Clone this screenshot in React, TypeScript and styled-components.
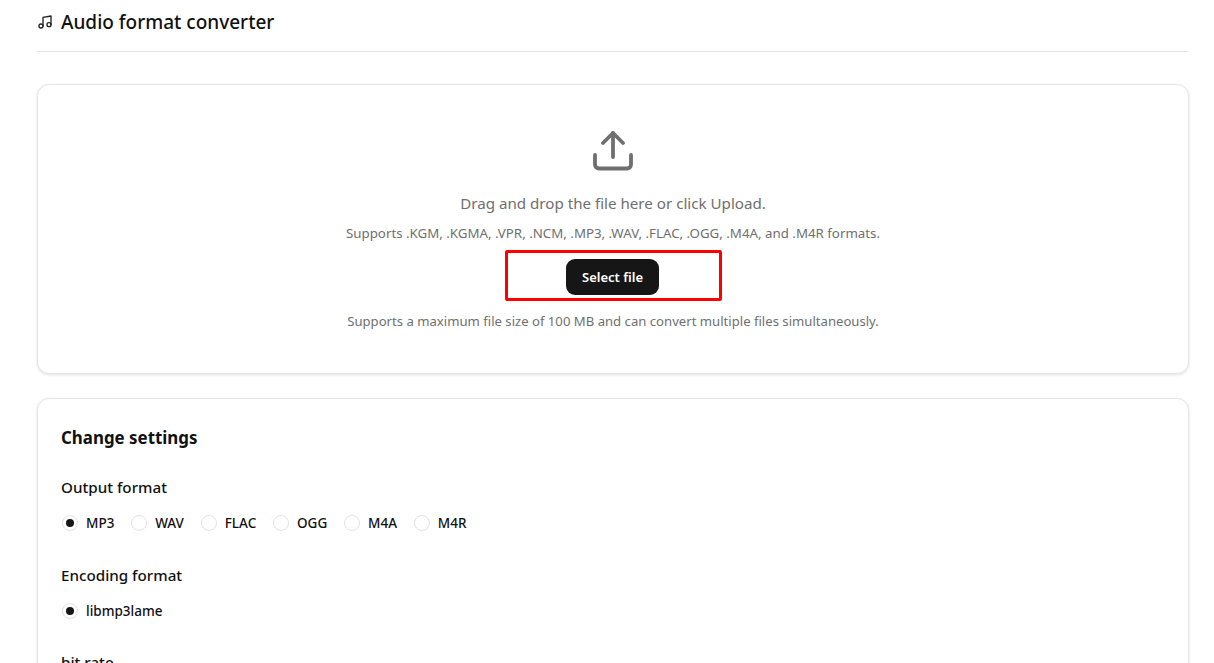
import React from 'react';
import styled, { createGlobalStyle } from 'styled-components';

const GlobalStyle = createGlobalStyle`
  html, body {
    margin: 0;
    padding: 0;
    height: 100%;
    overflow: hidden;
    background: #fff;
    font-family: "Noto Sans", "Open Sans", sans-serif;
    color: #111;
  }
`;

const Page = styled.div`
  height: 663px;
  overflow: hidden;
  padding: 0 25px 0 37px;
`;

const Header = styled.header`
  display: flex;
  align-items: center;
  gap: 8px;
  box-sizing: border-box;
  height: 52px;
  padding-bottom: 7px;
  border-bottom: 1px solid #e5e5e5;
`;

const Title = styled.h1`
  margin: 0;
  font-size: 19px;
  font-weight: 500;
  line-height: 26px;
`;

const Card = styled.section`
  box-sizing: border-box;
  border: 1px solid #e6e6e6;
  border-radius: 12px;
  background: #fff;
  box-shadow: 0 1px 3px rgba(0, 0, 0, 0.12);
`;

const UploadCard = styled(Card)`
  height: 290px;
  margin-top: 32px;
  padding-top: 46px;
  display: flex;
  flex-direction: column;
  align-items: center;
`;

const UploadHint = styled.p`
  margin: 20px 0 0;
  font-size: 15.15px;
  line-height: 24px;
  color: #6f6f6f;
`;

const SmallHint = styled.p<{ $top: number; $size: number }>`
  margin: ${(p) => p.$top}px 0 0;
  font-size: ${(p) => p.$size}px;
  line-height: 18px;
  color: #6f6f6f;
`;

const Highlight = styled.div`
  box-sizing: border-box;
  width: 217px;
  height: 51px;
  margin-top: 8px;
  padding: 2px 2px 0 0;
  border: 3px solid #f00;
  border-radius: 2px;
  display: flex;
  align-items: center;
  justify-content: center;
`;

const SelectButton = styled.button`
  width: 93px;
  height: 36px;
  padding: 0 0 0 1px;
  border: none;
  border-radius: 9px;
  background: #161616;
  color: #fff;
  font-family: inherit;
  font-size: 13px;
  font-weight: 600;
  cursor: pointer;
`;

const SettingsCard = styled(Card)`
  height: 400px;
  margin-top: 24px;
  padding: 25px 23px;
`;

const SettingsTitle = styled.h2`
  margin: 0;
  font-size: 16.9px;
  font-weight: 700;
  line-height: 28px;
`;

const Group = styled.div<{ $top: number }>`
  margin-top: ${(p) => p.$top}px;
`;

const GroupLabel = styled.div`
  font-size: 15.2px;
  font-weight: 500;
  line-height: 22px;
`;

const RadioRow = styled.div`
  display: flex;
  gap: 16.8px;
  margin-top: 15px;
  padding-left: 1px;
`;

const RadioItem = styled.label`
  display: flex;
  align-items: center;
  gap: 8px;
  height: 20px;
  font-size: 13.5px;
  font-weight: 500;
`;

const RadioDot = styled.span<{ $checked?: boolean }>`
  box-sizing: border-box;
  width: 16px;
  height: 16px;
  border-radius: 50%;
  border: 1px solid #e3e3e3;
  background: #fff;
  display: flex;
  align-items: center;
  justify-content: center;

  &::after {
    content: '';
    width: 8px;
    height: 8px;
    border-radius: 50%;
    background: ${(p) => (p.$checked ? '#161616' : 'transparent')};
  }
`;

const outputFormats = ['MP3', 'WAV', 'FLAC', 'OGG', 'M4A', 'M4R'];

const MusicIcon = () => (
  <svg width="16" height="16" viewBox="0 0 24 24" fill="none" stroke="#222" strokeWidth="2" strokeLinecap="round" strokeLinejoin="round">
    <path d="M9 18V5l12-2v13" />
    <circle cx="6" cy="18" r="3" />
    <circle cx="18" cy="16" r="3" />
  </svg>
);

const UploadIcon = () => (
  <svg width="40" height="40" viewBox="0 0 40 40" fill="none" stroke="#6f6f6f" strokeWidth="3.8" strokeLinecap="round" strokeLinejoin="round">
    <path d="M20 26V2" />
    <path d="M10 12 20 2l10 10" />
    <path d="M2 24v9.500a4 4 0 0 0 4 4h28a4 4 0 0 0 4-4V24" />
  </svg>
);

const App = () => (
  <>
    <GlobalStyle />
    <Page>
      <Header>
        <MusicIcon />
        <Title>Audio format converter</Title>
      </Header>

      <UploadCard>
        <UploadIcon />
        <UploadHint>Drag and drop the file here or click Upload.</UploadHint>
        <SmallHint $top={9} $size={13.3}>Supports .KGM, .KGMA, .VPR, .NCM, .MP3, .WAV, .FLAC, .OGG, .M4A, and .M4R formats.</SmallHint>
        <Highlight>
          <SelectButton>Select file</SelectButton>
        </Highlight>
        <SmallHint $top={11} $size={13.13}>Supports a maximum file size of 100 MB and can convert multiple files simultaneously.</SmallHint>
      </UploadCard>

      <SettingsCard>
        <SettingsTitle>Change settings</SettingsTitle>
        <Group $top={24}>
          <GroupLabel>Output format</GroupLabel>
          <RadioRow>
            {outputFormats.map((f, i) => (
              <RadioItem key={f}>
                <RadioDot $checked={i === 0} />
                {f}
              </RadioItem>
            ))}
          </RadioRow>
        </Group>
        <Group $top={31}>
          <GroupLabel>Encoding format</GroupLabel>
          <RadioRow>
            <RadioItem>
              <RadioDot $checked />
              libmp3lame
            </RadioItem>
          </RadioRow>
        </Group>
        <Group $top={30}>
          <GroupLabel>bit rate</GroupLabel>
        </Group>
      </SettingsCard>
    </Page>
  </>
);

export default App;
